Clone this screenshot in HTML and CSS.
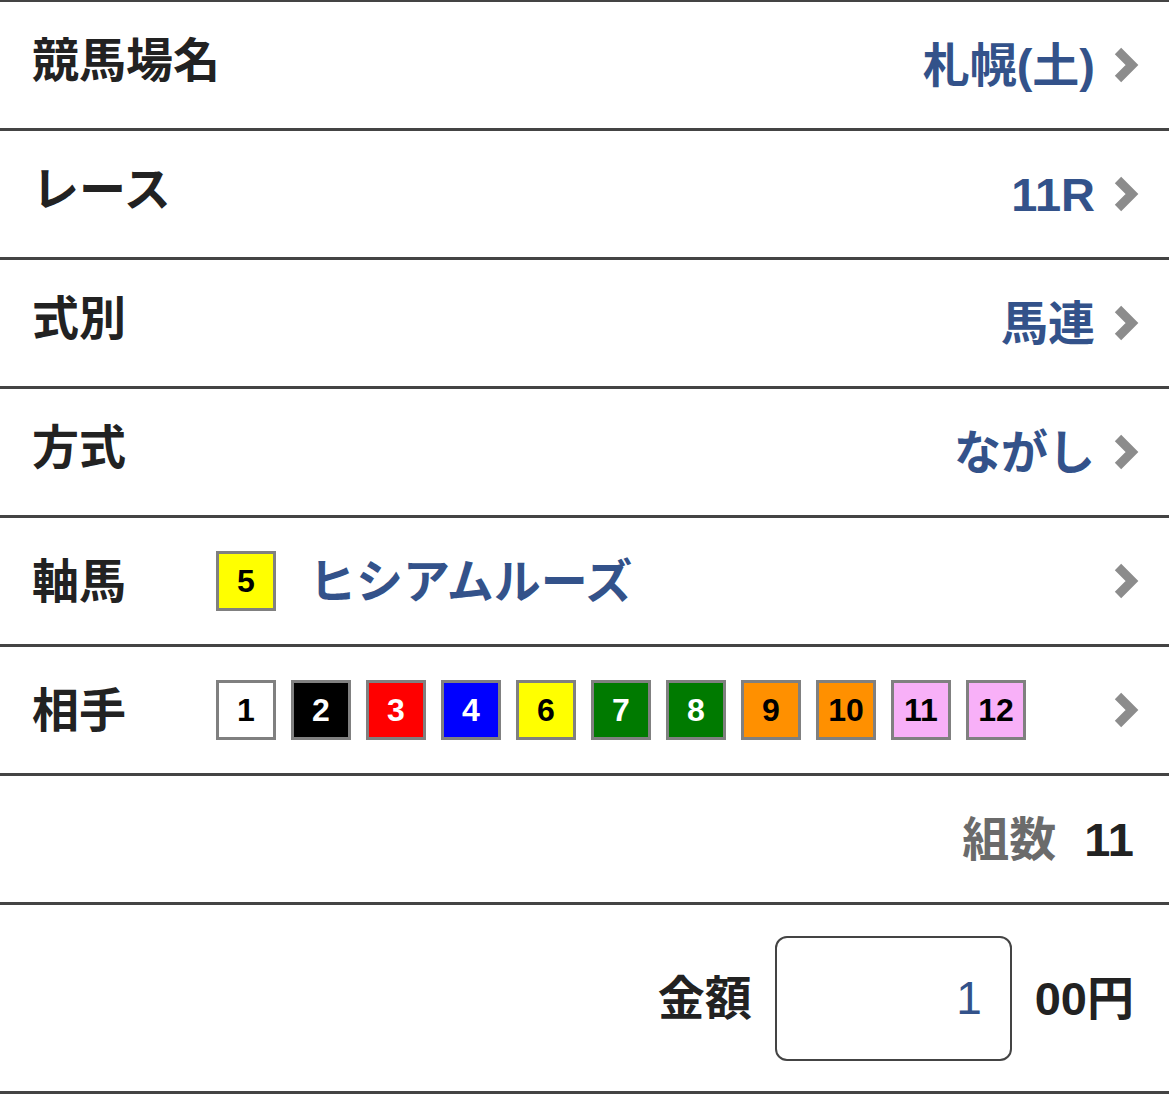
FILE: index.html
```html
<!DOCTYPE html>
<html lang="ja">
<head>
    <meta charset="UTF-8">
    <meta name="viewport" content="width=device-width, initial-scale=1.0">
    <title>投票内容</title>
    <link rel="stylesheet" href="styles.css">
</head>
<body>
    <!-- 投票フォーム -->
    <ul class="bet-form">
        <li class="row row-select">
            <span class="label">競馬場名</span>
            <span class="value">札幌(土)</span>
            <svg class="chevron" viewBox="0 0 26 38" width="26" height="38"><polyline points="5,5 19,19 5,33" /></svg>
        </li>
        <li class="row row-select">
            <span class="label">レース</span>
            <span class="value">11R</span>
            <svg class="chevron" viewBox="0 0 26 38" width="26" height="38"><polyline points="5,5 19,19 5,33" /></svg>
        </li>
        <li class="row row-select">
            <span class="label">式別</span>
            <span class="value">馬連</span>
            <svg class="chevron" viewBox="0 0 26 38" width="26" height="38"><polyline points="5,5 19,19 5,33" /></svg>
        </li>
        <li class="row row-select">
            <span class="label">方式</span>
            <span class="value">ながし</span>
            <svg class="chevron" viewBox="0 0 26 38" width="26" height="38"><polyline points="5,5 19,19 5,33" /></svg>
        </li>

        <!-- 軸馬 -->
        <li class="row row-horse">
            <span class="label">軸馬</span>
            <span class="waku waku-5">5</span>
            <span class="horse-name">ヒシアムルーズ</span>
            <svg class="chevron" viewBox="0 0 26 38" width="26" height="38"><polyline points="5,5 19,19 5,33" /></svg>
        </li>

        <!-- 相手 -->
        <li class="row row-horse">
            <span class="label">相手</span>
            <div class="waku-list">
                <span class="waku waku-1">1</span>
                <span class="waku waku-2">2</span>
                <span class="waku waku-3">3</span>
                <span class="waku waku-4">4</span>
                <span class="waku waku-5">6</span>
                <span class="waku waku-6">7</span>
                <span class="waku waku-6">8</span>
                <span class="waku waku-7">9</span>
                <span class="waku waku-7">10</span>
                <span class="waku waku-8">11</span>
                <span class="waku waku-8">12</span>
            </div>
            <svg class="chevron" viewBox="0 0 26 38" width="26" height="38"><polyline points="5,5 19,19 5,33" /></svg>
        </li>

        <!-- 組数 -->
        <li class="row row-count">
            <span class="count-label">組数</span>
            <span class="count">11</span>
        </li>

        <!-- 金額 -->
        <li class="row row-amount">
            <span class="amount-label">金額</span>
            <input class="amount-input" type="text" value="1" inputmode="numeric">
            <span class="amount-unit">00円</span>
        </li>
    </ul>
</body>
</html>
```

FILE: styles.css
```css
/* ページ全体 */
body {
    margin: 0;
    background-color: #fff;
    font-family: "Liberation Sans", "Noto Sans CJK JP", sans-serif;
    font-weight: bold;
    color: #222;
}

/* リスト */
.bet-form {
    list-style: none;
    margin: -1px 0 0;
    padding: 0;
    border-bottom: 3px solid #444;
}

/* 各行 */
.row {
    display: flex;
    align-items: center;
    height: 126px;
    padding: 0 30px 0 32px;
    border-top: 3px solid #444;
    font-size: 47px;
    line-height: 1;
}

.label {
    color: #222;
}

/* 選択行のラベルは少し上 */
.row-select .label {
    margin-bottom: 10px;
}

.value {
    margin-left: auto;
    color: #33528a;
}

/* 右矢印 */
.chevron {
    flex-shrink: 0;
    margin-left: 18px;
}

.chevron polyline {
    fill: none;
    stroke: #8c8c8c;
    stroke-width: 9;
}

/* 馬番の枠 */
.row-horse .label {
    width: 184px;
}

.row-horse .chevron {
    margin-left: auto;
}

.waku {
    display: flex;
    align-items: center;
    justify-content: center;
    box-sizing: border-box;
    width: 60px;
    height: 60px;
    border: 3px solid #808080;
    font-family: "Liberation Sans", sans-serif;
    font-size: 32px;
    color: #000;
}

.waku-1 { background-color: #fff; }
.waku-2 { background-color: #000; color: #fff; }
.waku-3 { background-color: #f00; color: #fff; }
.waku-4 { background-color: #00f; color: #fff; }
.waku-5 { background-color: #ff0; }
.waku-6 { background-color: #007a00; color: #fff; }
.waku-7 { background-color: #ff9000; }
.waku-8 { background-color: #f8b0f8; }

.horse-name {
    margin-left: 33px;
    color: #33528a;
}

.waku-list {
    display: flex;
    gap: 15px;
}

/* 組数 */
.row-count {
    justify-content: flex-end;
    padding-right: 35px;
}

.count-label {
    color: #6b6b6b;
}

.count {
    margin-left: 28px;
}

/* 金額 */
.row-amount {
    justify-content: flex-end;
    height: 186px;
    padding-right: 35px;
}

.amount-input {
    box-sizing: border-box;
    width: 237px;
    height: 125px;
    margin: 0 23px;
    padding: 0 28px 0 10px;
    border: 2px solid #444;
    border-radius: 12px;
    background-color: #fff;
    font-family: "Liberation Sans", sans-serif;
    font-size: 46px;
    font-weight: normal;
    color: #33528a;
    text-align: right;
    outline: none;
}
```
